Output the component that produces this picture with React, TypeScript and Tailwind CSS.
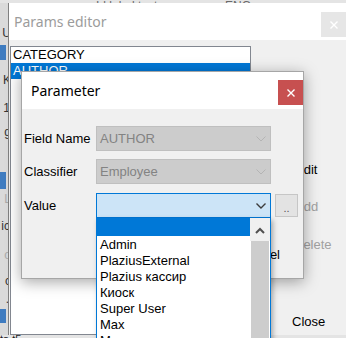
const Chevron = ({color, width = 1}: {color: string; width?: number}) => (
  <svg width="10" height="6" viewBox="0 0 10 6" fill="none">
    <path d="M0.5 0.5 L5 5 L9.5 0.5" stroke={color} strokeWidth={width} />
  </svg>
)

const Cross = ({color}: {color: string}) => (
  <svg width="8" height="8" viewBox="0 0 8 8" fill="none">
    <path d="M0.5 0.5 L7.5 7.5 M7.5 0.5 L0.5 7.5" stroke={color} strokeWidth="1.4" />
  </svg>
)

const Combo = ({text, active}: {text: string; active?: boolean}) => (
  <div
    className={
      active
        ? 'w-[175px] h-[25px] flex items-center justify-between border border-[#0078d7] bg-[#cce4f7] pl-[3px] pr-[4px]'
        : 'w-[175px] h-[25px] flex items-center justify-between border border-[#bfbfbf] bg-[#cccccc] pl-[3px] pr-[4px] text-[#838383]'
    }
  >
    <span className="text-[13px] leading-[16px]">{text}</span>
    <Chevron color={active ? '#3c3c3c' : '#b4b4b4'} width={active ? 1.4 : 1} />
  </div>
)

const items = ['Admin', 'PlaziusExternal', 'Plazius кассир', 'Киоск', 'Super User', 'Max', 'Менеджер']

export default function App() {
  return (
    <div className="relative w-[346px] h-[338px] overflow-hidden bg-[#e4e4e4] font-['Liberation_Sans',Arial,sans-serif] text-black">
      {/* app behind the dialogs */}
      <div className="flex flex-col h-full">
        <div className="h-[3px] overflow-hidden flex items-end pl-[96px] text-[12px] leading-[12px] text-[#6a6a6a]">
          <span className="w-[129px] overflow-hidden whitespace-nowrap -mb-[9px]">Id  label  text</span>
          <span className="-mb-[9px]">ENG</span>
        </div>
        <div className="flex-1 w-[8px] bg-[#dadada] flex flex-col items-end overflow-hidden text-[12px] leading-[12px] text-[#333]">
          <span className="mt-[24px] -mr-[3px]">U</span>
          <div className="mt-[6px] w-[6px] h-[15px] bg-[#3f7cc0] self-start" />
          <span className="mt-[14px] -mr-[3px]">K</span>
          <span className="mt-[16px] -mr-[2px]">1</span>
          <span className="mt-[12px] -mr-[3px]">g</span>
          <div className="mt-[34px] w-[6px] h-[17px] bg-[#3f7cc0] self-start" />
          <span className="mt-[4px] -mr-[3px] text-[#aaa]">L</span>
          <span className="mt-[15px] -mr-[2px]">ic</span>
          <span className="mt-[17px] -mr-[3px] text-[#aaa]">o</span>
          <span className="mt-[14px] -mr-[3px]">c</span>
          <span className="mt-[6px] -mr-[1px]">.</span>
          <div className="mt-[4px] w-[6px] h-[14px] bg-[#3f7cc0] self-start" />
        </div>
        <div className="h-[3px]" />
      </div>
      <div className="absolute left-0 top-[333px] text-[11px] leading-[12px] text-[#222]">ta.t5</div>

      {/* Params editor window */}
      <div className="absolute left-[8px] top-[3px] w-[338px] h-[332px] flex flex-col border-l border-[#808080] bg-[#f0f0f0]">
        <div className="h-[37px] shrink-0 bg-white flex items-start justify-between">
          <span className="pl-[5px] pt-[9px] text-[14px] leading-[19px] text-[#9c9c9c] font-['Noto_Sans',sans-serif]">
            Params editor
          </span>
          <div className="mt-[9px] w-[25px] h-[25px] bg-[#e6e6e6] flex items-center justify-center">
            <Cross color="#ffffff" />
          </div>
        </div>
        <div className="flex-1 flex pt-[6px] pl-[1px]">
          <div className="w-[241px] h-[289px] bg-white border border-[#828790] text-[13px] leading-[16px]">
            <div className="h-[16px] pl-[2px]">CATEGORY</div>
            <div className="h-[16px] pl-[2px] bg-[#0078d7] text-white">AUTHOR</div>
          </div>
          <div className="ml-[44px] flex flex-col text-[13px] leading-[16px]">
            <span className="mt-[116px]">Edit</span>
            <span className="mt-[21px] text-[#a0a0a0]">Add</span>
            <span className="mt-[22px] -ml-[1px] text-[#a0a0a0]">Delete</span>
            <span className="mt-[61px] -ml-[3px]">Close</span>
          </div>
        </div>
      </div>

      {/* Parameter dialog */}
      <div className="absolute left-[21px] top-[71px] w-[283px] h-[208px] flex flex-col border border-[#a6a6a6] bg-[#f0f0f0] shadow-[0_3px_14px_rgba(0,0,0,0.35)]">
        <div className="h-[37px] shrink-0 bg-white flex items-start justify-between">
          <span className="pl-[9px] pt-[9px] text-[14px] leading-[19px] font-['Noto_Sans',sans-serif]">Parameter</span>
          <div className="mt-[8px] w-[25px] h-[25px] bg-[#c75050] flex items-center justify-center">
            <Cross color="#ffffff" />
          </div>
        </div>
        <div className="flex flex-col pt-[17px] pl-[2px] text-[13px] leading-[16px]">
          <div className="flex items-center">
            <span className="w-[72px]">Field Name</span>
            <Combo text="AUTHOR" />
          </div>
          <div className="flex items-center mt-[8px]">
            <span className="w-[72px]">Classifier</span>
            <Combo text="Employee" />
          </div>
          <div className="flex items-center mt-[9px]">
            <span className="w-[72px]">Value</span>
            <Combo text="" active />
            <div className="ml-[4px] w-[23px] h-[23px] border border-[#c6c6c6] bg-[#e3e3e3] flex items-end justify-center pb-[3px] text-[11px] leading-[10px] text-[#555]">
              ..
            </div>
          </div>
          <div className="flex justify-end gap-[30px] pr-[23px] mt-[29px]">
            <span>OK</span>
            <span>Cancel</span>
          </div>
        </div>
      </div>

      {/* open dropdown list */}
      <div className="absolute left-[96px] top-[218px] w-[175px] h-[140px] flex border-x border-b border-[#0078d7] bg-white shadow-[2px_2px_5px_rgba(0,0,0,0.3)]">
        <div className="flex-1 flex flex-col text-[13px] leading-[16px]">
          <div className="h-[18px] bg-[#0078d7]" />
          <div className="h-[1px]" />
          {items.map(item => (
            <div key={item} className="h-[16px] pl-[3px]">
              {item}
            </div>
          ))}
        </div>
        <div className="w-[20px] flex flex-col">
          <div className="h-[23px] bg-[#f0f0f0] flex items-center justify-center pt-[2px]">
            <svg width="10" height="7" viewBox="0 0 10 7" fill="none">
              <path d="M1 6 L5 2 L9 6" stroke="#505050" strokeWidth="2" />
            </svg>
          </div>
          <div className="flex-1 bg-[#cdcdcd] mx-[1px]" />
        </div>
      </div>
    </div>
  )
}
